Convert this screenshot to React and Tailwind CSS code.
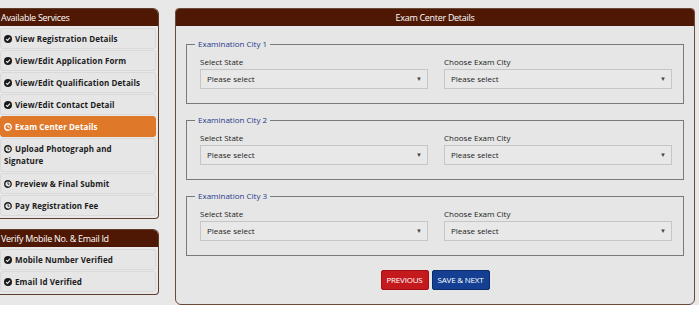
import React from 'react';

function CheckIcon() {
    return (
        <svg width="8" height="8" viewBox="0 0 16 16" className="inline-block align-[-1px] mr-[3px]">
            <circle cx="8" cy="8" r="8" fill="#1a1a1a" />
            <path d="M4.2 8.3 L7 11 L12 5.4" stroke="#e6e6e6" strokeWidth="2.4" fill="none" />
        </svg>
    );
}

function ClockIcon({ color = '#1a1a1a' }) {
    return (
        <svg width="8" height="8" viewBox="0 0 16 16" className="inline-block align-[-1px] mr-[3px]">
            <circle cx="8" cy="8" r="6.5" stroke={color} strokeWidth="2.6" fill="none" />
            <path d="M8 4.5 V8.4 H10.8" stroke={color} strokeWidth="1.8" fill="none" />
        </svg>
    );
}

function SideItem({ icon, children, active, tall }) {
    return (
        <div
            className={`px-[3px] py-[4px] text-[8px] font-bold tracking-[0.1px] rounded-[3px] border ${
                tall ? 'leading-[12px]' : 'leading-[11px]'
            } ${
                active
                    ? 'bg-[#e0782a] border-[#e0782a] text-white'
                    : 'bg-[#e6e6e6] border-[#d9d9d9] text-[#1c1c1c]'
            }`}
        >
            {icon}
            {children}
        </div>
    );
}

function CityFieldset({ n }) {
    return (
        <fieldset className="border border-[#7a7a7a] pl-[13px] pr-[11px] pt-[6px] pb-[14px] mx-[10px]">
            <legend className="-ml-[5px] px-[3px] text-[8px] leading-[12px] text-[#1d3b8a]">Examination City {n}</legend>
            <div className="grid grid-cols-2 gap-[16px]">
                {['Select State', 'Choose Exam City'].map((l) => (
                    <div key={l}>
                        <div className="text-[8px] text-[#222] leading-[12px] mb-[1px]">{l}</div>
                        <div className="h-[20px] bg-[#e8e8e8] border border-[#c6c6c6] flex items-center justify-between pl-[6px] pr-[5px] text-[8px] text-[#222]">
                            <span>Please select</span>
                            <span className="text-[6px] text-[#444]">▼</span>
                        </div>
                    </div>
                ))}
            </div>
        </fieldset>
    );
}

export default function App() {
    return (
        <div className="w-[699px] h-[311px] bg-white font-['Open_Sans',sans-serif] overflow-hidden">
            <div className="flex pt-[8px] bg-[#e8e8e8] h-[305px]">
                {/* Sidebar */}
                <div className="w-[159px] shrink-0 flex flex-col gap-[10px]">
                    <div className="border border-l-0 border-[#5e3d2c] rounded-tr-[6px] rounded-br-[4px] bg-[#e8e8e8]">
                        <div className="h-[17px] bg-[#4f1805] rounded-tr-[5px] text-white text-[9px] tracking-[-0.3px] leading-[17px] pl-[1px]">
                            Available Services
                        </div>
                        <div className="flex flex-col gap-[1px] pt-[2px] pb-[2px] pr-[2px]">
                            <SideItem icon={<CheckIcon />}>View Registration Details</SideItem>
                            <SideItem icon={<CheckIcon />}>View/Edit Application Form</SideItem>
                            <SideItem icon={<CheckIcon />}>View/Edit Qualification Details</SideItem>
                            <SideItem icon={<CheckIcon />}>View/Edit Contact Detail</SideItem>
                            <SideItem icon={<ClockIcon color="#fff" />} active>Exam Center Details</SideItem>
                            <SideItem icon={<ClockIcon />} tall>Upload Photograph and Signature</SideItem>
                            <SideItem icon={<ClockIcon />}>Preview &amp; Final Submit</SideItem>
                            <SideItem icon={<ClockIcon />}>Pay Registration Fee</SideItem>
                        </div>
                    </div>

                    <div className="border border-l-0 border-[#5e3d2c] rounded-tr-[6px] rounded-br-[4px] bg-[#e8e8e8]">
                        <div className="h-[17px] bg-[#4f1805] rounded-tr-[5px] text-white text-[9px] tracking-[-0.3px] leading-[17px] pl-[1px]">
                            Verify Mobile No. &amp; Email Id
                        </div>
                        <div className="flex flex-col gap-[1px] pt-[2px] pb-[2px] pr-[2px]">
                            <SideItem icon={<CheckIcon />}>Mobile Number Verified</SideItem>
                            <SideItem icon={<CheckIcon />}>Email Id Verified</SideItem>
                        </div>
                    </div>
                </div>

                {/* Main panel */}
                <div className="ml-[16px] w-[520px] h-[297px] border border-[#6b4a3a] rounded-t-[4px] rounded-b-[6px] bg-[#e6e6e6] flex flex-col">
                    <div className="h-[17px] bg-[#4f1805] rounded-t-[3px] text-white text-[9px] tracking-[-0.3px] leading-[17px] text-center">
                        Exam Center Details
                    </div>
                    <div className="flex flex-col gap-[10px] pt-[12px]">
                        <CityFieldset n={1} />
                        <CityFieldset n={2} />
                        <CityFieldset n={3} />
                    </div>
                    <div className="flex justify-center gap-[3px] mt-[14px]">
                        <button className="h-[20px] px-[5px] bg-[#c41a1e] border border-[#a01014] rounded-[2px] text-white text-[8px] tracking-[-0.2px]">
                            PREVIOUS
                        </button>
                        <button className="h-[20px] px-[5px] bg-[#143f92] border border-[#0d2c6c] rounded-[2px] text-white text-[8px] tracking-[-0.2px]">
                            SAVE &amp; NEXT
                        </button>
                    </div>
                </div>
            </div>
        </div>
    );
}
